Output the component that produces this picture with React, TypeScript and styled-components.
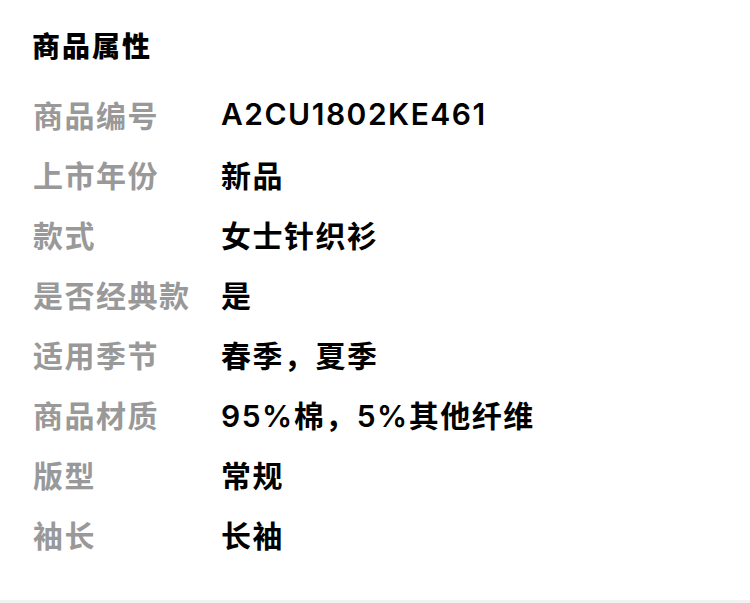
import styled, { createGlobalStyle } from 'styled-components';

const GlobalStyle = createGlobalStyle`
  html, body {
    margin: 0;
    padding: 0;
    background: #f2f2f2;
  }
  body {
    font-family: Inter, "Noto Sans CJK SC", sans-serif;
  }
`;

const attrs = [
  { label: '商品编号', value: 'A2CU1802KE461' },
  { label: '上市年份', value: '新品' },
  { label: '款式', value: '女士针织衫' },
  { label: '是否经典款', value: '是' },
  { label: '适用季节', value: '春季，夏季' },
  { label: '商品材质', value: '95%棉，5%其他纤维' },
  { label: '版型', value: '常规' },
  { label: '袖长', value: '长袖' },
];

const App = () => {
  return (
    <>
      <GlobalStyle />
      <Section>
        <Title>商品属性</Title>
        <AttrList>
          {attrs.map((item) => (
            <AttrRow key={item.label}>
              <AttrLabel>{item.label}</AttrLabel>
              <AttrValue>{item.value}</AttrValue>
            </AttrRow>
          ))}
        </AttrList>
      </Section>
    </>
  );
};

export default App;

export const Section = styled.section`
  background: #fff;
  padding: 27px 32px 33px 33px;
  height: 600px;
  box-sizing: border-box;
`;

export const Title = styled.h2`
  margin: 0 0 17px -1px;
  font-size: 28px;
  line-height: 40px;
  font-weight: 900;
  color: #000;
  letter-spacing: 2px;
`;

export const AttrList = styled.div`
  display: flex;
  flex-direction: column;
`;

export const AttrRow = styled.div`
  display: grid;
  grid-template-columns: 188px 1fr;
  align-items: center;
  height: 60px;
`;

export const AttrLabel = styled.span`
  font-size: 30px;
  font-weight: 600;
  color: #999;
  letter-spacing: 1.5px;
  white-space: nowrap;
`;

export const AttrValue = styled.span`
  font-size: 30px;
  font-weight: 600;
  color: #000;
  letter-spacing: 1.5px;
  white-space: nowrap;
`;
